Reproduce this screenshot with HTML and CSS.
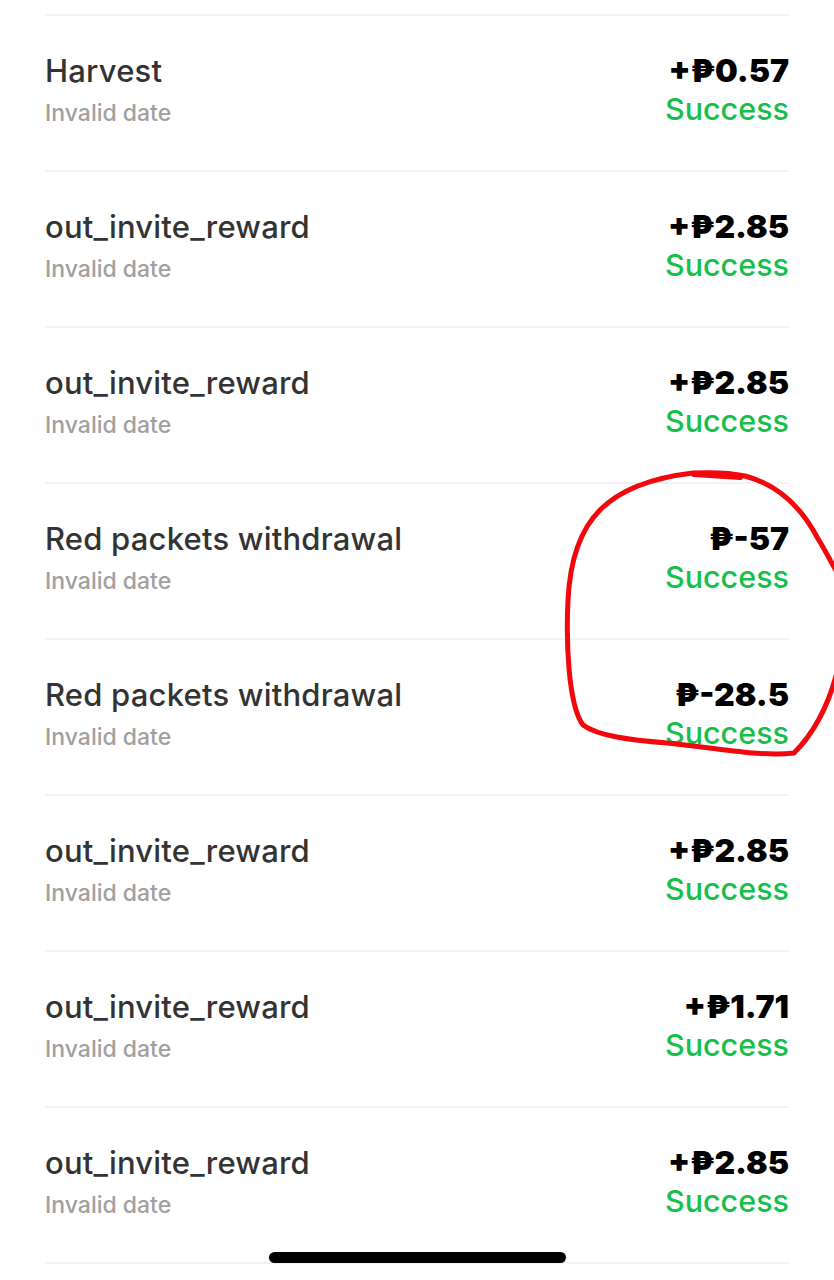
FILE: index.html
```html
<!DOCTYPE html>
<html>
<head>
<meta charset="utf-8">
	<title>Records</title>
	<link rel="stylesheet" href="styles.css">
</head>
<body>
	<div class="page">
		<ul class="list">
			<li class="row">
				<div class="info"><p class="name">Harvest</p><p class="date">Invalid date</p></div>
				<div class="money"><p class="amount">+₱0.57</p><p class="status">Success</p></div>
			</li>
			<li class="row">
				<div class="info"><p class="name">out_invite_reward</p><p class="date">Invalid date</p></div>
				<div class="money"><p class="amount">+₱2.85</p><p class="status">Success</p></div>
			</li>
			<li class="row">
				<div class="info"><p class="name">out_invite_reward</p><p class="date">Invalid date</p></div>
				<div class="money"><p class="amount">+₱2.85</p><p class="status">Success</p></div>
			</li>
			<li class="row">
				<div class="info"><p class="name">Red packets withdrawal</p><p class="date">Invalid date</p></div>
				<div class="money"><p class="amount">₱-57</p><p class="status">Success</p></div>
			</li>
			<li class="row">
				<div class="info"><p class="name">Red packets withdrawal</p><p class="date">Invalid date</p></div>
				<div class="money"><p class="amount">₱-28.5</p><p class="status">Success</p></div>
			</li>
			<li class="row">
				<div class="info"><p class="name">out_invite_reward</p><p class="date">Invalid date</p></div>
				<div class="money"><p class="amount">+₱2.85</p><p class="status">Success</p></div>
			</li>
			<li class="row">
				<div class="info"><p class="name">out_invite_reward</p><p class="date">Invalid date</p></div>
				<div class="money"><p class="amount">+₱1.71</p><p class="status">Success</p></div>
			</li>
			<li class="row">
				<div class="info"><p class="name">out_invite_reward</p><p class="date">Invalid date</p></div>
				<div class="money"><p class="amount">+₱2.85</p><p class="status">Success</p></div>
			</li>
		</ul>

		<!-- hand drawn mark -->
		<svg class="mark" width="834" height="1280" viewBox="0 0 834 1280">
			<path d="M 836 676 C 828 705, 815 732, 794 753 C 760 757, 720 748, 667 743 C 630 740, 598 736, 583 725 C 568 705, 566 640, 568 600 C 570 560, 580 530, 600 510 C 620 490, 650 478, 693 473 C 715 472, 732 473, 745 476 C 775 484, 800 505, 817 537 C 825 550, 830 560, 838 574" fill="none" stroke="#f2080c" stroke-width="5" stroke-linecap="round" stroke-linejoin="round"/>
			<path d="M 694 474 L 740 477" fill="none" stroke="#f2080c" stroke-width="6" stroke-linecap="round"/>
		</svg>

		<div class="home-bar"></div>
	</div>
</body>
</html>
```

FILE: styles.css
```css
*{
	margin: 0;
	padding: 0;
}
body{
	background: #fff;
	font-family: Inter, "Liberation Sans", "DejaVu Sans", sans-serif;
}
.page{
	width: 834px;
	height: 1280px;
	position: relative;
	overflow: hidden;
}
.list{
	list-style: none;
	padding: 14px 45px 0 45px;
}
.row{
	height: 120px;
	padding-top: 34px;
	border-top: 2px solid #f2f2f2;
	display: flex;
	justify-content: space-between;
	align-items: flex-start;
}
.row:last-child{
	border-bottom: 2px solid #f2f2f2;
}
.info{
	padding-top: 2px;
}
.name{
	font-size: 31px;
	line-height: 38px;
	font-weight: 500;
	color: #333;
	letter-spacing: 0.2px;
}
.date{
	margin-top: 9px;
	font-size: 23px;
	line-height: 28px;
	font-weight: 500;
	color: #a0a0a0;
}
.money{
	padding-top: 2px;
	text-align: right;
}
.amount{
	font-size: 32px;
	line-height: 38px;
	font-weight: 900;
	color: #000;
}
.status{
	margin-top: 1px;
	font-size: 30.5px;
	line-height: 36px;
	font-weight: 500;
	color: #16c04a;
}
.mark{
	position: absolute;
	left: 0;
	top: 0;
	pointer-events: none;
}
.home-bar{
	position: absolute;
	left: 269px;
	top: 1252px;
	width: 297px;
	height: 11px;
	border-radius: 6px;
	background: #000;
}
```
